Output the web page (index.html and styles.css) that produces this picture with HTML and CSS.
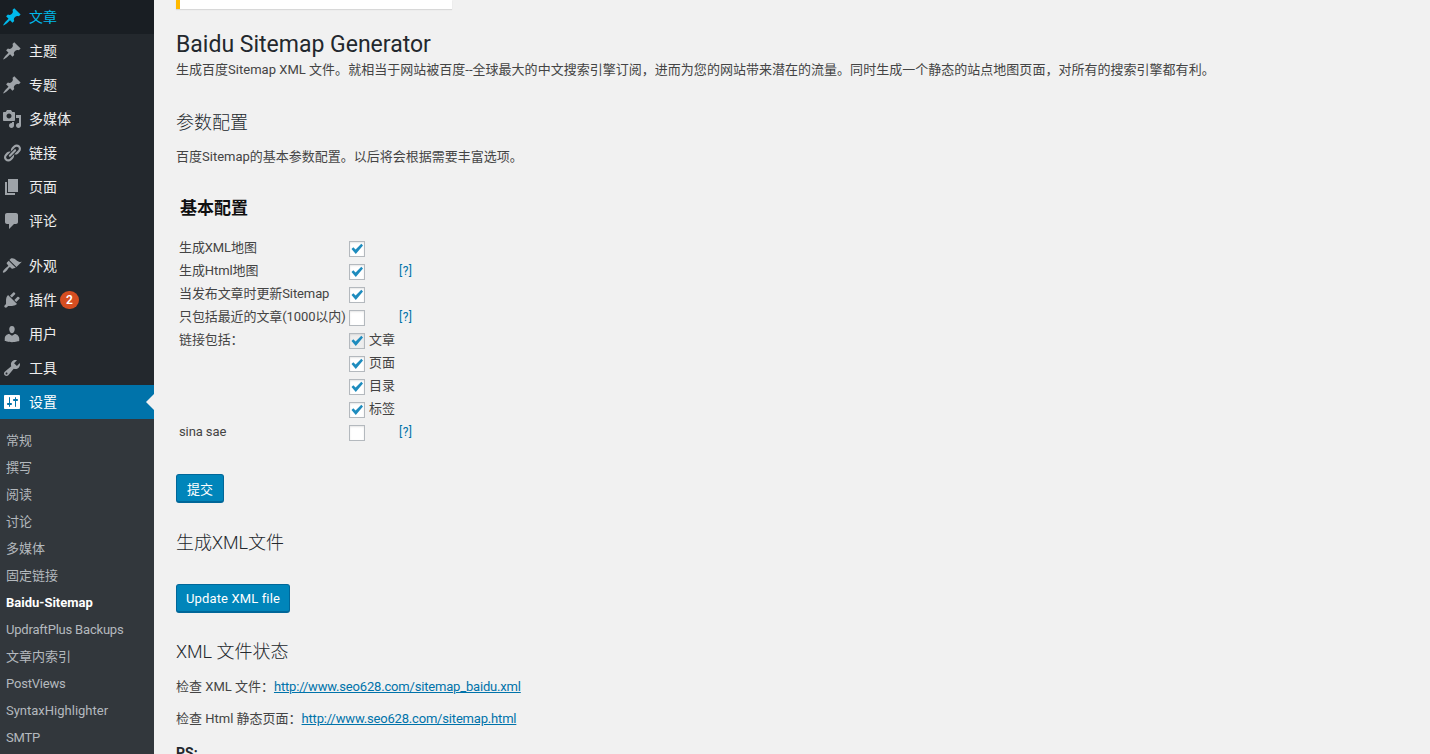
FILE: index.html
```html
<!DOCTYPE html>
<html lang="zh-CN">
<head>
<meta charset="utf-8">
<title>Baidu Sitemap Generator</title>
<link rel="stylesheet" href="styles.css">
</head>
<body>
<svg class="defs" width="0" height="0" aria-hidden="true">
  <symbol id="i-post" viewBox="0 0 20 20"><path d="M10.44 3.02l1.82-1.82 6.36 6.35-1.83 1.82c-1.05-.68-2.48-.57-3.41.36l-.75.75c-.92.93-1.04 2.35-.35 3.41l-1.83 1.82-2.41-2.41-2.8 2.79c-.42.42-3.38 2.71-3.8 2.29s1.86-3.39 2.28-3.81l2.79-2.79L4.1 9.36l1.83-1.82c1.05.69 2.48.57 3.41-.36l.75-.75c.93-.92 1.04-2.35.35-3.41z"/></symbol>
  <symbol id="i-media" viewBox="0 0 20 20"><path d="M13 11V4c0-.55-.45-1-1-1h-1.67L9 1H5L3.67 3H2c-.55 0-1 .45-1 1v7c0 .55.45 1 1 1h10c.55 0 1-.45 1-1zM7 4.5c1.38 0 2.5 1.12 2.5 2.5S8.38 9.5 7 9.5 4.5 8.38 4.5 7 5.62 4.5 7 4.5zM14 6h5v10.5c0 1.38-1.12 2.5-2.5 2.5S14 17.88 14 16.5s1.12-2.5 2.5-2.5c.17 0 .34.02.5.05V9h-3V6zm-4 8.05V13h2v3.5c0 1.38-1.12 2.5-2.5 2.5S7 17.88 7 16.5 8.12 14 9.5 14c.17 0 .34.02.5.05z"/></symbol>
  <symbol id="i-links" viewBox="0 0 20 20"><path d="M17.74 2.76c1.68 1.69 1.68 4.41 0 6.1l-1.53 1.52c-1.12 1.12-2.7 1.47-4.14 1.09l2.62-2.61.76-.77.76-.76c.84-.84.84-2.2 0-3.04-.84-.85-2.2-.85-3.04 0l-.77.76-3.38 3.38c-.37-1.44-.02-3.02 1.1-4.14l1.52-1.53c1.69-1.68 4.42-1.68 6.1 0zM8.59 13.43l5.34-5.34c.42-.42.42-1.1 0-1.52-.44-.43-1.13-.39-1.53 0l-5.33 5.34c-.42.42-.42 1.1 0 1.52.44.43 1.13.39 1.52 0zm-.76 2.29l4.14-4.15c.38 1.44.03 3.02-1.09 4.14l-1.52 1.53c-1.69 1.68-4.41 1.68-6.1 0-1.68-1.68-1.68-4.42 0-6.1l1.53-1.52c1.12-1.12 2.7-1.47 4.14-1.1l-4.14 4.15c-.85.84-.85 2.2 0 3.05.84.84 2.2.84 3.04 0z"/></symbol>
  <symbol id="i-page" viewBox="0 0 20 20"><path d="M6 15V2h10v13H6zm-1 1h8v2H3V5h2v11z"/></symbol>
  <symbol id="i-comments" viewBox="0 0 20 20"><path d="M5 2h9c1.1 0 2 .9 2 2v7c0 1.1-.9 2-2 2h-2l-5 5v-5H5c-1.1 0-2-.9-2-2V4c0-1.1.9-2 2-2z"/></symbol>
  <symbol id="i-appearance" viewBox="0 0 20 20"><path d="M14.48 11.06L7.41 3.99l1.5-1.5c.5-.56 2.3-.47 3.51.32 1.21.8 1.43 1.28 2.91 2.1 1.18.64 2.45 1.26 4.45.85zm-.71.71L6.7 4.7 4.93 6.47c-.39.39-.39 1.02 0 1.41l1.06 1.06c.39.39.39 1.03 0 1.42-.6.6-1.43 1.11-2.21 1.69-.35.26-.7.53-1.01.84-1.35 1.34-2.36 3.07-1.81 3.61.54.55 2.27-.46 3.61-1.81.31-.31.58-.65.84-1.01.58-.78 1.09-1.61 1.69-2.21.39-.39 1.03-.39 1.42 0l1.06 1.06c.39.39 1.02.39 1.41 0z"/></symbol>
  <symbol id="i-plugins" viewBox="0 0 20 20"><path d="M13.11 4.36L9.87 7.6 8 5.73l3.24-3.24c.35-.34 1.05-.2 1.56.32.52.51.66 1.21.31 1.55zm-8 1.77l.91-1.12 9.01 9.01-1.19.84c-.71.71-2.63 1.16-3.82 1.16H6.14L4.9 17.26c-.59.59-1.54.59-2.12 0-.59-.58-.59-1.53 0-2.12l1.24-1.24v-3.88c0-1.13.4-3.19 1.09-3.89zm7.26 3.97l3.24-3.24c.34-.35 1.04-.21 1.55.31.52.51.66 1.21.31 1.55l-3.24 3.25z"/></symbol>
  <symbol id="i-users" viewBox="0 0 20 20"><path d="M10 9.25c-2.27 0-2.73-3.44-2.73-3.44C7 4.02 7.82 2 9.97 2c2.16 0 2.98 2.02 2.71 3.81 0 0-.41 3.44-2.68 3.44zm0 2.57L12.72 10c2.39 0 4.52 2.33 4.52 4.53v2.49s-3.65 1.13-7.24 1.13c-3.65 0-7.24-1.13-7.24-1.13v-2.49c0-2.25 1.94-4.48 4.47-4.48z"/></symbol>
  <symbol id="i-tools" viewBox="0 0 20 20"><path d="M16.68 9.77c-1.34 1.34-3.3 1.67-4.95.99l-5.41 6.52c-.99.99-2.59.99-3.58 0s-.99-2.59 0-3.57l6.52-5.42c-.68-1.65-.35-3.61.99-4.95 1.28-1.28 3.12-1.62 4.72-1.06l-2.89 2.89 2.82 2.82 2.86-2.87c.53 1.58.18 3.39-1.08 4.65zM3.81 16.21c.4.39 1.04.39 1.43 0 .4-.4.4-1.04 0-1.43-.39-.4-1.03-.4-1.43 0-.39.39-.39 1.03 0 1.43z"/></symbol>
  <symbol id="i-settings" viewBox="0 0 20 20"><path d="M18 16V4c0-.55-.45-1-1-1H3c-.55 0-1 .45-1 1v12c0 .55.45 1 1 1h14c.55 0 1-.45 1-1zM8 11h1c.55 0 1 .45 1 1s-.45 1-1 1H8v1.5c0 .28-.22.5-.5.5s-.5-.22-.5-.5V13H6c-.55 0-1-.45-1-1s.45-1 1-1h1V5.5c0-.28.22-.5.5-.5s.5.22.5.5V11zm5-2h-1c-.55 0-1-.45-1-1s.45-1 1-1h1V5.5c0-.28.22-.5.5-.5s.5.22.5.5V7h1c.55 0 1 .45 1 1s-.45 1-1 1h-1v5.5c0 .28-.22.5-.5.5s-.5-.22-.5-.5V9z"/></symbol>
  <symbol id="i-check" viewBox="0 0 16 16"><path d="M2.5 8 4.3 6.3 6.6 8.6 12.3 2.8 14 4.5 6.8 13z"/></symbol>
</svg>
<div class="layout">
  <nav class="sidebar">
    <ul class="menu">
      <li class="item current"><svg class="ico"><use href="#i-post"/></svg><span>文章</span></li>
      <li class="item"><svg class="ico"><use href="#i-post"/></svg><span>主题</span></li>
      <li class="item"><svg class="ico"><use href="#i-post"/></svg><span>专题</span></li>
      <li class="item"><svg class="ico"><use href="#i-media"/></svg><span>多媒体</span></li>
      <li class="item"><svg class="ico"><use href="#i-links"/></svg><span>链接</span></li>
      <li class="item"><svg class="ico"><use href="#i-page"/></svg><span>页面</span></li>
      <li class="item"><svg class="ico"><use href="#i-comments"/></svg><span>评论</span></li>
      <li class="item sep"><svg class="ico"><use href="#i-appearance"/></svg><span>外观</span></li>
      <li class="item"><svg class="ico"><use href="#i-plugins"/></svg><span>插件</span><b class="badge">2</b></li>
      <li class="item"><svg class="ico"><use href="#i-users"/></svg><span>用户</span></li>
      <li class="item"><svg class="ico"><use href="#i-tools"/></svg><span>工具</span></li>
      <li class="item active"><svg class="ico"><use href="#i-settings"/></svg><span>设置</span></li>
    </ul>
    <ul class="submenu">
      <li>常规</li>
      <li>撰写</li>
      <li>阅读</li>
      <li>讨论</li>
      <li>多媒体</li>
      <li>固定链接</li>
      <li class="on">Baidu-Sitemap</li>
      <li class="en">UpdraftPlus Backups</li>
      <li>文章内索引</li>
      <li class="en">PostViews</li>
      <li>SyntaxHighlighter</li>
      <li class="en">SMTP</li>
    </ul>
  </nav>
  <main class="content">
    <div class="notice"></div>
    <h1>Baidu Sitemap Generator</h1>
    <p class="lead">生成百度Sitemap XML 文件。就相当于网站被百度--全球最大的中文搜索引擎订阅，进而为您的网站带来潜在的流量。同时生成一个静态的站点地图页面，对所有的搜索引擎都有利。</p>
    <h2 class="h-config">参数配置</h2>
    <p class="desc">百度Sitemap的基本参数配置。以后将会根据需要丰富选项。</p>
    <h3>基本配置</h3>
    <table class="opts">
      <tr><td class="l">生成XML地图</td><td><span class="cb on"><svg><use href="#i-check"/></svg></span></td><td></td></tr>
      <tr><td class="l">生成Html地图</td><td><span class="cb on"><svg><use href="#i-check"/></svg></span></td><td class="help">[?]</td></tr>
      <tr><td class="l">当发布文章时更新Sitemap</td><td><span class="cb on"><svg><use href="#i-check"/></svg></span></td><td></td></tr>
      <tr><td class="l">只包括最近的文章(1000以内)</td><td><span class="cb"></span></td><td class="help">[?]</td></tr>
      <tr><td class="l">链接包括：</td><td><span class="cb on focus"><svg><use href="#i-check"/></svg></span><span class="t">文章</span></td><td></td></tr>
      <tr><td class="l"></td><td><span class="cb on"><svg><use href="#i-check"/></svg></span><span class="t">页面</span></td><td></td></tr>
      <tr><td class="l"></td><td><span class="cb on"><svg><use href="#i-check"/></svg></span><span class="t">目录</span></td><td></td></tr>
      <tr><td class="l"></td><td><span class="cb on"><svg><use href="#i-check"/></svg></span><span class="t">标签</span></td><td></td></tr>
      <tr><td class="l">sina sae</td><td><span class="cb"></span></td><td class="help">[?]</td></tr>
    </table>
    <button class="btn b-submit" type="button">提交</button>
    <h2 class="h-gen">生成XML文件</h2>
    <button class="btn b-update" type="button">Update XML file</button>
    <h2 class="h-status">XML 文件状态</h2>
    <p class="st">检查 XML 文件：<a href="#">http://www.seo628.com/sitemap_baidu.xml</a></p>
    <p class="st">检查 Html 静态页面：<a href="#">http://www.seo628.com/sitemap.html</a></p>
    <h4>PS:</h4>
  </main>
</div>
</body>
</html>
```

FILE: styles.css
```css
html, body { margin: 0; padding: 0; height: 100%; overflow: hidden; }
body {
  background: #f1f1f1;
  color: #444;
  font-family: Roboto, "Noto Sans CJK SC", sans-serif;
  font-size: 13px;
}
.defs { position: absolute; }
.layout { display: flex; height: 754px; overflow: hidden; }
ul { list-style: none; margin: 0; padding: 0; }

.sidebar { width: 154px; flex: none; background: #23282d; height: 754px; overflow: hidden; }
.item {
  display: flex; align-items: center; height: 34px;
  color: #eee; font-size: 14px;
}
.item span { margin-top: -2px; }
.item .ico { width: 20px; height: 20px; margin: 0 7px 0 2px; fill: #9ea3a8; flex: none; }
.item.sep { margin-top: 11px; }
.item.current { background: #191e23; color: #00b9eb; }
.item.current .ico { fill: #00b9eb; }
.item.active { background: #0073aa; color: #fff; position: relative; }
.item.active .ico { fill: #fff; }
.item.active::after {
  content: ""; position: absolute; right: 0; top: 9px;
  border: 8px solid transparent; border-right-color: #f1f1f1; border-left-width: 0;
}
.badge {
  width: 19px; height: 18px; border-radius: 9px; margin-left: 3px;
  background: #d54e21; color: #fff; font-size: 12px; font-weight: 600;
  display: flex; align-items: center; justify-content: center;
}
.submenu { background: #32373c; padding: 8px 0 0; height: 335px; }
.submenu li {
  height: 27px; line-height: 27px; padding-left: 6px;
  color: #b4b9be; font-size: 13px; white-space: nowrap;
}
.submenu li.on { color: #fff; font-weight: 700; }
.submenu li.en { letter-spacing: -.2px; }

.content { flex: 1; padding-left: 22px; min-width: 0; }
.notice {
  width: 272px; height: 9px; background: #fff; border-left: 4px solid #ffb900;
  box-shadow: 0 1px 1px rgba(0,0,0,.1);
}
h1 {
  margin: 21px 0 0; font-size: 23px; line-height: 29px; font-weight: 400; color: #23282d;
}
.lead { margin: 1px 0 0; line-height: 20px; letter-spacing: .02px; }
h2 { font-size: 18px; line-height: 24px; font-weight: 300; color: #23282d; margin: 0; }
.h-config { margin-top: 31px; }
.desc { margin: 12px 0 0; line-height: 20px; }
h3 { margin: 29px 0 0 4px; font-size: 17px; line-height: 24px; font-weight: 700; color: #111; }
.opts { border-collapse: collapse; margin-top: 17px; }
.opts td { padding: 0; height: 23px; vertical-align: middle; white-space: nowrap; line-height: 18px; }
.opts .l { width: 170px; padding: 2px 0 0 3px; height: 21px; vertical-align: top; letter-spacing: -.1px; }
.opts td:nth-child(2) { width: 50px; }
.opts .help { color: #0073aa; font-size: 12px; letter-spacing: .5px; padding-bottom: 2px; height: 21px; }
.cb {
  display: inline-block; width: 14px; height: 14px; background: #fff;
  border: 1px solid #b4b9be; vertical-align: middle; box-shadow: inset 0 1px 2px rgba(0,0,0,.1);
}
.cb.focus { background: #eee; }
.cb svg { display: block; width: 16px; height: 16px; margin: -1px 0 0 -1px; fill: #1e8cbe; }
.t { display: inline-block; margin: -2px 0 0 4px; vertical-align: middle; }

.btn {
  display: block; background: #0085ba; color: #fff; border: 1px solid #006799;
  border-bottom-width: 2px; border-radius: 3px; font: inherit; padding: 0;
  height: 29px;
}
.b-submit { width: 48px; margin-top: 30px; }
.b-update { width: 114px; margin-top: 29px; letter-spacing: .13px; }
.h-gen { margin-top: 28px; }
.h-status { margin-top: 27px; }
.st { margin: 0; line-height: 20px; }
.h-status + .st { margin-top: 13px; }
.st + .st { margin-top: 12px; }
a { color: #0073aa; text-decoration: underline; letter-spacing: -.18px; }
h4 { margin: 14px 0 0; font-size: 14px; line-height: 20px; font-weight: 700; color: #23282d; }
```
